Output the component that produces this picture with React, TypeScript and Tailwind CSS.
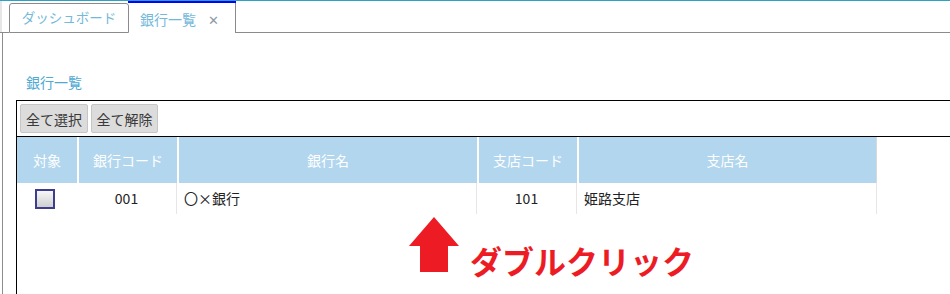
import React from 'react';

const headers = ['対象', '銀行コード', '銀行名', '支店コード', '支店名'];

const App: React.FC = () => {
  return (
    <div className="relative w-[950px] h-[294px] overflow-hidden bg-white border-t border-[#2ba3c4] font-['Noto_Sans_CJK_JP','Noto_Sans',sans-serif]">
      {/* Tab bar */}
      <div className="flex h-[32px]">
        <div className="w-[9px] border-b border-[#8a8a8f] bg-[linear-gradient(to_right,#e6e6e6_2px,white_2px)]" />
        <div className="self-end h-[30px] w-[120px] border border-[#8a8a8f] rounded-t-[3px] flex items-center justify-center text-[13.5px] leading-none text-[#74b9d9]">
          ダッシュボード
        </div>
        <div className="-ml-px w-[108px] h-full border-t-2 border-[#0000ff] relative">
          <div className="absolute left-0 right-0 top-0 bottom-0 border-r border-[#8a8a8f] flex items-center pl-[12px] pt-[2px] text-[14px] leading-none text-[#74b9d9]">
            <span>銀行一覧</span>
            <span className="ml-[12px] text-[#8a9aa8] text-[13px]">✕</span>
          </div>
        </div>
        <div className="flex-1 border-b border-[#8a8a8f]" />
      </div>

      {/* Content */}
      <div className="ml-[2px] border-l border-[#8c8c8c] h-[262px]">
        <div className="pt-[40px] pl-[23px] h-[58px] text-[14px] leading-[18px] text-[#4fa9d2]">銀行一覧</div>
        <div className="relative ml-[13px] mt-[9px] w-[960px] h-[200px] border-t border-l border-black">
          {/* Toolbar */}
          <div className="flex gap-[3px] pl-[3px] pt-[3px] h-[36px] border-b border-black">
            <button className="h-[29px] w-[68px] rounded-[2px] bg-[#dcdcdc] border border-[#c6c6c6] text-[14px] leading-none text-[#3a3a3a]">全て選択</button>
            <button className="h-[29px] w-[67px] rounded-[2px] bg-[#dcdcdc] border border-[#c6c6c6] text-[14px] leading-none text-[#3a3a3a]">全て解除</button>
          </div>

          {/* Grid */}
          <div className="grid grid-cols-[60px_100px_300px_100px_300px]">
            {headers.map((h, i) => (
              <div
                key={h}
                className={
                  i === 0
                    ? 'h-[46px] bg-[#b1d6ee] flex items-center justify-center text-[14px] text-white'
                    : i === 4
                    ? 'h-[46px] bg-[#b1d6ee] border-l-2 border-white border-r border-r-[#d8d8d8] flex items-center justify-center text-[14px] text-white'
                    : 'h-[46px] bg-[#b1d6ee] border-l-2 border-white flex items-center justify-center text-[14px] text-white'
                }
              >
                {h}
              </div>
            ))}

            <div className="h-[31px] flex items-center pl-[18px]">
              <div className="w-[20px] h-[20px] border-2 border-[#3d3d8f] bg-gradient-to-b from-[#f7f7f7] to-[#cfcfcf]" />
            </div>
            <div className="h-[31px] border-r border-[#e6e6e6] flex items-center justify-center text-[14px] text-[#222]">001</div>
            <div className="h-[31px] border-r border-[#e6e6e6] flex items-center pl-[7px] text-[14px] text-[#222]">〇×銀行</div>
            <div className="h-[31px] border-r border-[#e6e6e6] flex items-center justify-center text-[14px] text-[#222]">101</div>
            <div className="h-[31px] border-r border-[#e6e6e6] flex items-center pl-[7px] text-[14px] text-[#222]">姫路支店</div>
          </div>

          {/* Annotation */}
          <svg className="absolute left-[391px] top-[116px]" width="52" height="55" viewBox="0 0 52 55">
            <path d="M26 0 L51 29 L40 29 L40 55 L12 55 L12 29 L1 29 Z" fill="#ed1c24" />
          </svg>
          <div className="absolute left-[453px] top-[135px] text-[32px] font-bold leading-[48px] text-[#ed1c24] whitespace-nowrap">
            ダブルクリック
          </div>
        </div>
      </div>
    </div>
  );
};

export default App;
